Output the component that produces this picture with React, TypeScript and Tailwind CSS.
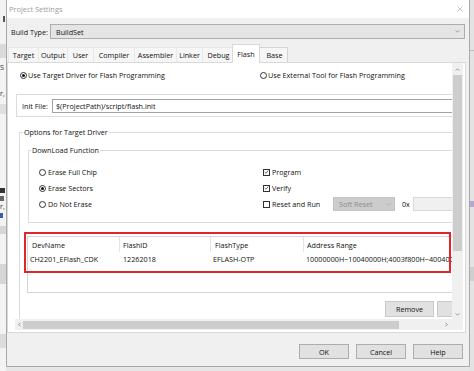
import React from "react";

const TABS = [
  { label: "Target", w: "w-[30px]" },
  { label: "Output", w: "w-[29px]" },
  { label: "User", w: "w-[26px]" },
  { label: "Compiler", w: "w-[41px]" },
  { label: "Assembler", w: "w-[42px]" },
  { label: "Linker", w: "w-[26px]" },
  { label: "Debug", w: "w-[32px]" },
];

function Radio({ checked }: { checked?: boolean }) {
  return (
    <span className="flex h-[7px] w-[7px] shrink-0 items-center justify-center rounded-full border border-[#333] bg-white">
      {checked ? <span className="h-[3px] w-[3px] rounded-full bg-[#111]" /> : null}
    </span>
  );
}

function Box({ checked }: { checked?: boolean }) {
  return (
    <span className="flex h-[7px] w-[7px] shrink-0 items-center justify-center border border-[#333] bg-white">
      {checked ? (
        <svg viewBox="0 0 7 7" className="h-[6px] w-[6px]">
          <path d="M1 3.6 L2.8 5.3 L6 1.4" stroke="#222" strokeWidth="0.9" fill="none" />
        </svg>
      ) : null}
    </span>
  );
}

function Chevron({ color = "#666" }: { color?: string }) {
  return (
    <svg viewBox="0 0 6 4" className="h-[3px] w-[5px]">
      <path d="M0.5 0.5 L3 3 L5.5 0.5" stroke={color} strokeWidth="0.8" fill="none" />
    </svg>
  );
}

export default function App() {
  return (
    <div className="flex h-[371px] w-[474px] overflow-hidden bg-[#e6e6e6] font-['Open_Sans','Noto_Sans',sans-serif] text-[7.2px] leading-[10px] text-[#111]">
      {/* window behind, left edge */}
      <div className="flex w-[6px] shrink-0 flex-col overflow-hidden bg-[#f3f3f3] text-[#333]">
        <div className="h-[16px]" />
        <div className="ml-[3px] h-[6px] w-[2px] bg-[#555]" />
        <div className="mt-[22px] h-[14px] bg-[#dadada]" />
        <span className="mt-[4px]">S</span>
        <span className="mt-[16px]">r,</span>
        <div className="mt-[6px] h-[10px] bg-[#e0e0e0]" />
        <div className="mt-[74px] h-[5px] w-[5px] bg-[#333]" />
        <div className="mt-[3px] h-[5px] w-[4px] bg-[#666]" />
        <span>r,</span>
        <div className="mt-[2px] h-[5px] w-[3px] bg-[#3a5fa8]" />
        <div className="mt-[8px] h-[8px] bg-[#d6d6d6]" />
        <div className="mt-[30px] h-[20px] bg-[#d6d6d6]" />
        <div className="mt-[50px] h-[14px] bg-[#dcdcdc]" />
      </div>

      {/* dialog */}
      <div className="flex h-[367px] w-[464px] shrink-0 flex-col border-x border-b border-[#a9a9a9] bg-[#f0f0f0]">
        <div className="flex h-[18px] items-center justify-between bg-white pl-[2px] pr-[6px] text-[7.4px] text-[#9c9c9c]">
          <span>Project Settings</span>
          <svg viewBox="0 0 6 6" className="h-[6px] w-[6px]">
            <path d="M0.5 0.5 L5.5 5.5 M5.5 0.5 L0.5 5.5" stroke="#b5b5b5" strokeWidth="0.7" />
          </svg>
        </div>

        {/* build type */}
        <div className="mt-[6px] flex h-[15px] items-center pr-[4px]">
          <span className="w-[43px] shrink-0 pl-[4px]">Build Type:</span>
          <div className="flex h-full flex-1 items-center justify-between border border-[#adadad] bg-[#e5e5e5] pl-[5px] pr-[4px]">
            <span>BuildSet</span>
            <Chevron />
          </div>
        </div>

        {/* tabs */}
        <div className="mt-[6px] flex h-[17px] items-end pl-[1px]">
          {TABS.map((t) => (
            <div
              key={t.label}
              className={`${t.w} flex h-[15px] items-center justify-center border-t border-l border-[#e8e8e8] bg-[#f6f6f6]`}
            >
              {t.label}
            </div>
          ))}
          <div className="relative z-10 -mx-[2px] -mb-px flex h-[19px] w-[28px] items-center justify-center border-x border-t border-[#d9d9d9] bg-white pb-[1px]">
            Flash
          </div>
          <div className="flex h-[15px] w-[30px] items-center justify-center border border-b-0 border-[#d4d4d4] bg-[#f6f6f6] pl-[3px]">
            Base
          </div>
        </div>

        {/* tab page */}
        <div className="mr-[3px] flex h-[271px] flex-col border border-[#d9d9d9] bg-white pl-[7px] pr-[2px] pb-[2px]">
          <div className="flex">
            {/* scroll viewport */}
            <div className="relative h-[256px] w-[437px] overflow-hidden bg-white">
              <div className="w-[495px]">
                <div className="mt-[5px] flex h-[14px] items-center">
                  <div className="flex w-[245px] items-center gap-[1px] pl-[5px]">
                    <Radio checked />
                    <span>Use Target Driver for Flash Programming</span>
                  </div>
                  <div className="flex items-center gap-[1px]">
                    <Radio />
                    <span>Use External Tool for Flash Programming</span>
                  </div>
                </div>

                {/* init file */}
                <div className="mt-[12px] ml-[1px] flex h-[23px] items-center border border-[#dcdcdc]">
                  <span className="w-[35px] shrink-0 pl-[5px]">Init File:</span>
                  <div className="flex h-[14px] flex-1 items-center border border-[#a2a2a2] pl-[3px]">
                    $(ProjectPath)/script/flash.init
                  </div>
                </div>

                {/* options for target driver */}
                <fieldset className="mt-[10px] ml-[4px] h-[200px] border border-[#dcdcdc]">
                  <legend className="ml-[3px] px-[1px] leading-[10px]">Options for Target Driver</legend>

                  <fieldset className="mt-[8px] ml-[8px] border border-[#dcdcdc] pt-[9px] pb-[10px]">
                    <legend className="ml-[2px] px-[1px] leading-[10px]">DownLoad Function</legend>
                    <div className="flex">
                      <div className="flex w-[234px] flex-col pl-[10px]">
                        <div className="flex h-[16px] items-center gap-[2px]">
                          <Radio />
                          <span>Erase Full Chip</span>
                        </div>
                        <div className="flex h-[16px] items-center gap-[2px]">
                          <Radio checked />
                          <span>Erase Sectors</span>
                        </div>
                        <div className="flex h-[16px] items-center gap-[2px]">
                          <Radio />
                          <span>Do Not Erase</span>
                        </div>
                      </div>
                      <div className="flex flex-col">
                        <div className="flex h-[16px] items-center gap-[2px]">
                          <Box checked />
                          <span>Program</span>
                        </div>
                        <div className="flex h-[16px] items-center gap-[2px]">
                          <Box checked />
                          <span>Verify</span>
                        </div>
                        <div className="flex h-[16px] items-center gap-[2px]">
                          <Box />
                          <span className="w-[59px]">Reset and Run</span>
                          <div className="flex h-[14px] w-[62px] items-center justify-between border border-[#c4c4c4] bg-[#cccccc] pl-[5px] pr-[3px] text-[#8c8c8c]">
                            <span>Soft Reset</span>
                            <Chevron color="#a0a0a0" />
                          </div>
                          <span className="ml-[5px] w-[9px]">0x</span>
                          <div className="h-[14px] w-[70px] border border-[#d9d9d9] bg-[#f0f0f0]" />
                        </div>
                      </div>
                    </div>
                  </fieldset>

                  {/* device list */}
                  <div className="mt-[13px] ml-[7px] h-[57px] w-[470px] border border-[#d5d5d5]">
                    <div className="flex h-[15px] items-center">
                      <span className="flex h-full w-[92px] items-center border-r border-[#e5e5e5] pl-[4px]">DevName</span>
                      <span className="flex h-full w-[91px] items-center border-r border-[#e5e5e5] pl-[3px]">FlashID</span>
                      <span className="flex h-full w-[93px] items-center border-r border-[#e5e5e5] pl-[4px]">FlashType</span>
                      <span className="flex h-full flex-1 items-center pl-[3px]">Address Range</span>
                    </div>
                    <div className="flex h-[14px] items-center whitespace-nowrap">
                      <span className="w-[92px] pl-[2px]">CH2201_EFlash_CDK</span>
                      <span className="w-[91px] pl-[3px]">12262018</span>
                      <span className="w-[93px] pl-[2px]">EFLASH-OTP</span>
                      <span className="pl-[2px]">10000000H~10040000H;4003f800H~40040000H</span>
                    </div>
                  </div>

                  <div className="mt-[8px] flex gap-[3px] pl-[365px]">
                    <div className="flex h-[16px] w-[49px] items-center justify-center border border-[#c9c9c9] bg-[#e1e1e1]">
                      Remove
                    </div>
                    <div className="h-[16px] w-[30px] border border-[#c9c9c9] bg-[#e1e1e1]" />
                  </div>
                </fieldset>
              </div>

              {/* annotation */}
              <div className="absolute left-[9px] top-[169px] h-[41px] w-[427px] border-2 border-[#e3242b]" />
            </div>

            {/* vertical scrollbar */}
            <div className="flex h-[256px] w-[11px] flex-col items-center bg-[#f0f0f0]">
              <div className="flex h-[12px] items-center justify-center">
                <svg viewBox="0 0 6 4" className="h-[3px] w-[5px]">
                  <path d="M0.5 3.5 L3 1 L5.5 3.5" stroke="#606060" strokeWidth="0.8" fill="none" />
                </svg>
              </div>
              <div className="h-[176px] w-[9px] bg-[#cdcdcd]" />
              <div className="flex-1" />
              <div className="flex h-[10px] items-center justify-center">
                <Chevron color="#606060" />
              </div>
            </div>
          </div>

          {/* horizontal scrollbar */}
          <div className="flex h-[11px]">
            <div className="flex h-full w-[437px] items-center bg-[#f0f0f0]">
              <div className="flex w-[8px] items-center justify-center">
                <svg viewBox="0 0 4 6" className="h-[5px] w-[3px]">
                  <path d="M3.5 0.5 L1 3 L3.5 5.5" stroke="#606060" strokeWidth="0.8" fill="none" />
                </svg>
              </div>
              <div className="h-[8px] w-[376px] bg-[#cdcdcd]" />
              <div className="flex-1" />
              <div className="flex w-[11px] items-center justify-center">
                <svg viewBox="0 0 4 6" className="h-[5px] w-[3px]">
                  <path d="M0.5 0.5 L3 3 L0.5 5.5" stroke="#606060" strokeWidth="0.8" fill="none" />
                </svg>
              </div>
            </div>
            <div className="h-full w-[11px] bg-[#f0f0f0]" />
          </div>
        </div>

        {/* dialog buttons */}
        <div className="mt-[11px] flex justify-end gap-[7px] pr-[6px]">
          {["OK", "Cancel", "Help"].map((b) => (
            <div
              key={b}
              className="flex h-[15px] w-[50px] items-center justify-center border border-[#adadad] bg-[#e1e1e1]"
            >
              {b}
            </div>
          ))}
        </div>
      </div>

      {/* window behind, right edge */}
      <div className="flex w-[4px] shrink-0 flex-col bg-[#e3e3e3]">
        <div className="mt-[50px] h-[1px] bg-[#bdbdbd]" />
        <div className="mt-[150px] h-[6px] bg-[#b9a6cf]" />
        <div className="mt-[60px] h-[14px] bg-[#cfcfcf]" />
      </div>
    </div>
  );
}
